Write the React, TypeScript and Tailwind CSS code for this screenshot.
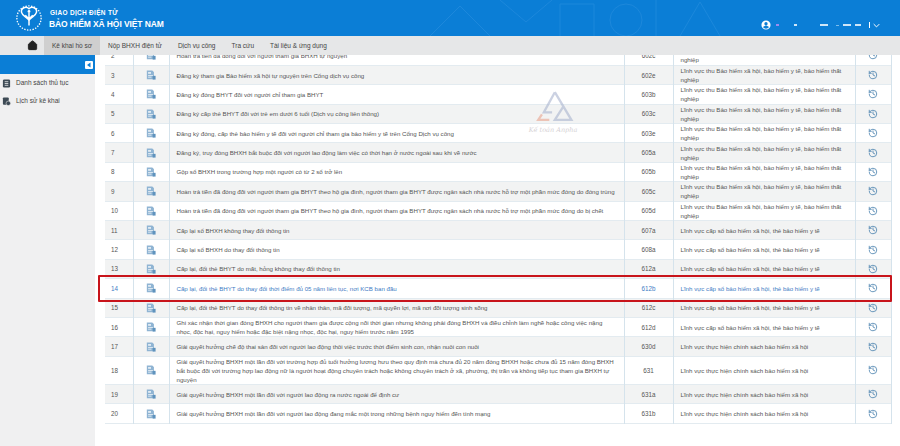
import { History, House } from "lucide-react";

const thu = "Lĩnh vực thu Bảo hiểm xã hội, bảo hiểm y tế, bảo hiểm thất nghiệp";
const cap = "Lĩnh vực cấp sổ bảo hiểm xã hội, thẻ bảo hiểm y tế";
const cs = "Lĩnh vực thực hiện chính sách bảo hiểm xã hội";

const rows = [
  { no: 2, name: "Hoàn trả tiền đã đóng đối với người tham gia BHXH tự nguyện", code: "602c", field: thu },
  { no: 3, name: "Đăng ký tham gia Bảo hiểm xã hội tự nguyện trên Cổng dịch vụ công", code: "602e", field: thu },
  { no: 4, name: "Đăng ký đóng BHYT đối với người chỉ tham gia BHYT", code: "603b", field: thu },
  { no: 5, name: "Đăng ký cấp thẻ BHYT đối với trẻ em dưới 6 tuổi (Dịch vụ công liên thông)", code: "603c", field: thu },
  { no: 6, name: "Đăng ký đóng, cấp thẻ bảo hiểm y tế đối với người chỉ tham gia bảo hiểm y tế trên Cổng Dịch vụ công", code: "603e", field: thu },
  { no: 7, name: "Đăng ký, truy đóng BHXH bắt buộc đối với người lao động làm việc có thời hạn ở nước ngoài sau khi về nước", code: "605a", field: thu },
  { no: 8, name: "Gộp sổ BHXH trong trường hợp một người có từ 2 sổ trở lên", code: "605b", field: thu },
  { no: 9, name: "Hoàn trả tiền đã đóng đối với người tham gia BHYT theo hộ gia đình, người tham gia BHYT được ngân sách nhà nước hỗ trợ một phần mức đóng do đóng trùng", code: "605c", field: thu },
  { no: 10, name: "Hoàn trả tiền đã đóng đối với người tham gia BHYT theo hộ gia đình, người tham gia BHYT được ngân sách nhà nước hỗ trợ một phần mức đóng do bị chết", code: "605d", field: thu },
  { no: 11, name: "Cấp lại sổ BHXH không thay đổi thông tin", code: "607a", field: cap },
  { no: 12, name: "Cấp lại sổ BHXH do thay đổi thông tin", code: "608a", field: cap },
  { no: 13, name: "Cấp lại, đổi thẻ BHYT do mất, hỏng không thay đổi thông tin", code: "612a", field: cap },
  { no: 14, name: "Cấp lại, đổi thẻ BHYT do thay đổi thời điểm đủ 05 năm liên tục, nơi KCB ban đầu", code: "612b", field: cap, active: true },
  { no: 15, name: "Cấp lại, đổi thẻ BHYT do thay đổi thông tin về nhân thân, mã đối tượng, mã quyền lợi, mã nơi đối tượng sinh sống", code: "612c", field: cap },
  { no: 16, name: "Ghi xác nhận thời gian đóng BHXH cho người tham gia được cộng nối thời gian nhưng không phải đóng BHXH và điều chỉnh làm nghề hoặc công việc nặng nhọc, độc hại, nguy hiểm hoặc đặc biệt nặng nhọc, độc hại, nguy hiểm trước năm 1995", code: "612d", field: cap },
  { no: 17, name: "Giải quyết hưởng chế độ thai sản đối với người lao động thôi việc trước thời điểm sinh con, nhận nuôi con nuôi", code: "630d", field: cs },
  { no: 18, name: "Giải quyết hưởng BHXH một lần đối với trường hợp đủ tuổi hưởng lương hưu theo quy định mà chưa đủ 20 năm đóng BHXH hoặc chưa đủ 15 năm đóng BHXH bắt buộc đối với trường hợp lao động nữ là người hoạt động chuyên trách hoặc không chuyên trách ở xã, phường, thị trấn và không tiếp tục tham gia BHXH tự nguyện", code: "631", field: cs },
  { no: 19, name: "Giải quyết hưởng BHXH một lần đối với người lao động ra nước ngoài để định cư", code: "631a", field: cs },
  { no: 20, name: "Giải quyết hưởng BHXH một lần đối với người lao động đang mắc một trong những bệnh nguy hiểm đến tính mạng", code: "631b", field: cs },
];

const tabs = ["Kê khai hồ sơ", "Nộp BHXH điện tử", "Dịch vụ công", "Tra cứu", "Tài liệu & ứng dụng"];

function DocIcon() {
  return (
    <svg viewBox="0 0 12 12" className="mx-auto h-[10px] w-[10px]">
      <path d="M1 0.5h6.5l2 2v8.5H1z" fill="#8fb4d3" />
      <path d="M2.5 2.5h3.5v2H2.5z" fill="#e8f0f7" />
      <path d="M2.5 6h6v1H2.5zM2.5 8h4v1H2.5z" fill="#f3f7fa" />
      <path d="M8 7h3.5v4.5H8z" fill="#5f93bd" />
    </svg>
  );
}

function Logo() {
  return (
    <svg viewBox="0 0 30 30" className="h-[28px] w-[28px] shrink-0" fill="none" stroke="#fff">
      <circle cx="15" cy="15" r="13" strokeWidth="1.4" strokeDasharray="1.5 1.5" />
      <path d="M15 5c-3-3-9-1-8 4 .6 3 4 4 8 8 4-4 7.400-5 8-8 1-5-5-7-8-4z" strokeWidth="1.6" />
      <path d="M15 9v14M11 12l4 4 4-4" strokeWidth="1.6" />
      <circle cx="15" cy="8" r="1.500" fill="#fff" stroke="none" />
    </svg>
  );
}

export default function App() {
  return (
    <div className="flex h-[446px] w-[900px] flex-col overflow-hidden bg-white font-['Liberation_Sans',Arial,sans-serif]">
      {/* Header */}
      <header className="relative flex h-[36px] shrink-0 items-center overflow-hidden bg-[#0b7ed6] pl-[15px] pr-[20px]">
        <svg viewBox="0 0 300 36" className="absolute left-[430px] top-0 h-[36px] w-[300px]" fill="none" stroke="#1d88db" strokeWidth="1">
          <path d="M0 36 30 6l30 30M70 0l26 22 26-22M130 36V4h34v32M180 20a16 16 0 1 0 32 0 16 16 0 1 0-32 0M226 0v36M250 36l20-34 20 34" />
        </svg>
        <Logo />
        <div className="relative ml-[6px] pt-[2px] text-white">
          <div className="ml-[1px] text-[6.500px] font-bold leading-[9px] tracking-[0.3px]">GIAO DỊCH ĐIỆN TỬ</div>
          <div className="mt-[2px] text-[8.500px] font-bold leading-[11px] tracking-[-0.1px]">BẢO HIỂM XÃ HỘI VIỆT NAM</div>
        </div>
        <div className="relative ml-auto mt-[14px] flex items-center">
          <svg viewBox="0 0 24 24" className="h-[10px] w-[10px]" fill="#fff">
            <path d="M12 1a11 11 0 1 0 0 22 11 11 0 0 0 0-22zm0 4a4 4 0 1 1 0 8 4 4 0 0 1 0-8zm0 16a9 9 0 0 1-7-3.400c1-2.300 4-3.600 7-3.600s6 1.300 7 3.600A9 9 0 0 1 12 21z" />
          </svg>
          <span className="ml-[5px] h-[2px] w-[3px] bg-[#9b8cf0]" />
          <span className="ml-[15px] h-[2px] w-[3px] bg-[#cfe6f8]" />
          <span className="ml-[23px] h-[2px] w-[8px] bg-[#cfe6f8]" />
          <span className="ml-[8px] h-[1px] w-[3px] bg-[#7cbcec]" />
          <span className="ml-[4px] h-[2px] w-[8px] bg-[#cfe6f8]" />
          <span className="ml-[4px] h-[2px] w-[6px] bg-[#cfe6f8]" />
          <span className="ml-[8px] h-[6px] w-px bg-white" />
          <svg viewBox="0 0 10 6" className="ml-[3px] h-[5px] w-[7px]" fill="none" stroke="#fff" strokeWidth="1.400">
            <path d="M1 1l4 4 4-4" />
          </svg>
        </div>
      </header>

      {/* Nav */}
      <nav className="flex h-[19px] shrink-0 items-center bg-[#e6e7e8] text-[6.500px] text-[#444]">
        <div className="flex w-[44px] justify-end pr-[6px]">
          <House size={11} fill="#222" stroke="#222" strokeWidth={2} />
        </div>
        {tabs.map((t, i) => (
          <div key={t} className={i === 0 ? "flex h-full items-center bg-[#cfcfcf] px-[8px]" : "flex h-full items-center px-[8px]"}>
            {t}
          </div>
        ))}
      </nav>

      <div className="flex min-h-0 flex-1">
        {/* Sidebar */}
        <aside className="w-[95px] shrink-0 bg-[#f0f0f1] text-[6.500px] text-[#444]">
          <div className="flex h-[19px] items-center justify-end bg-[#0b7ed6] pr-[2px]">
            <div className="flex h-[8px] w-[8px] items-center justify-center rounded-[1px] bg-white">
              <svg viewBox="0 0 6 6" className="h-[6px] w-[6px]" fill="#0b7ed6"><path d="M4.500 0.500v5L1 3z" /></svg>
            </div>
          </div>
          <div className="flex h-[18px] items-center gap-[5px] pl-[2px]">
            <svg viewBox="0 0 10 10" className="h-[9px] w-[9px]">
              <rect x="1" y="0.500" width="8" height="9" rx="1.500" fill="#3d4a55" />
              <path d="M3 3h4M3 5h4M3 7h4" stroke="#fff" strokeWidth="0.800" />
            </svg>
            Danh sách thủ tục
          </div>
          <div className="flex h-[18px] items-center gap-[5px] pl-[2px]">
            <svg viewBox="0 0 10 10" className="h-[9px] w-[9px]">
              <rect x="1" y="0.500" width="6.500" height="8" rx="1" fill="#3d4a55" />
              <circle cx="7" cy="7" r="2.500" fill="#3d4a55" stroke="#f0f0f1" strokeWidth="0.600" />
            </svg>
            Lịch sử kê khai
          </div>
        </aside>

        {/* Table */}
        <main className="relative min-w-0 flex-1 overflow-hidden pl-[10px]">
          <table className="mt-[-9px] w-[786px] table-fixed border-collapse text-[6.150px] leading-[9.100px] text-[#555]">
            <colgroup>
              <col className="w-[28px]" />
              <col className="w-[36px]" />
              <col className="w-[455px]" />
              <col className="w-[49px]" />
              <col className="w-[182px]" />
              <col className="w-[36px]" />
            </colgroup>
            <tbody>
              {rows.map((r) => (
                <tr
                  key={r.no}
                  className={`h-[19.400px] border-b border-[#e3ebf0] ${r.active ? "text-[#3f7cc4]" : ""} ${r.no % 2 === 1 ? "bg-[#f2f3f3]" : "bg-white"}`}
                >
                  <td className="pl-[6px] text-[6.300px]">{r.no}</td>
                  <td className="border-l border-[#d5e3ec]"><DocIcon /></td>
                  <td className="border-l border-[#d5e3ec] pl-[7px] pr-[7px]">{r.name}</td>
                  <td className="border-l border-[#d5e3ec] text-center text-[6.300px]">{r.code}</td>
                  <td className="border-l border-[#d5e3ec] pl-[7px] pr-[9px]">{r.field}</td>
                  <td className="border-x border-[#d5e3ec]">
                    <History size={10} strokeWidth={1.800} className="mx-auto text-[#3b78a8]" />
                  </td>
                </tr>
              ))}
            </tbody>
          </table>

          {/* Watermark */}
          <div className="absolute left-[430px] top-[35px] flex w-[56px] flex-col items-center opacity-60">
            <svg viewBox="0 0 50 34" className="h-[32px] w-[46px]" fill="none" strokeWidth="2.500">
              <path d="M27 2 15 24h9M27 2l18 30H27l9-14" stroke="#a9b4cf" />
              <path d="M13 26 9 32h12" stroke="#e9a48f" />
            </svg>
            <span className="mt-[4px] whitespace-nowrap font-['DejaVu_Serif',serif] text-[6.500px] italic text-[#b9b2b6]">Kế toán Anpha</span>
          </div>

          {/* Highlight of the selected row */}
          <div className="absolute left-[3px] top-[220px] h-[27px] w-[794px] rounded-[1px] border-2 border-[#c8141b]" />
        </main>
      </div>
    </div>
  );
}
